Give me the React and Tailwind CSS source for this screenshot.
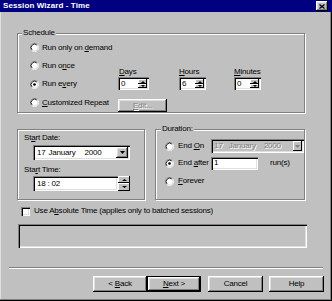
const raised =
  "shadow-[inset_-1px_-1px_0_#000,inset_1px_1px_0_#fff,inset_-2px_-2px_0_#808080,inset_2px_2px_0_#dfdfdf]";
const sunken =
  "shadow-[inset_1px_1px_0_#808080,inset_2px_2px_0_#000,inset_-1px_-1px_0_#fff,inset_-2px_-2px_0_#dfdfdf]";
const etched = "border border-[#808080] shadow-[inset_1px_1px_0_#fff,1px_1px_0_#fff]";
const smallBtn = "shadow-[inset_-1px_-1px_0_#000,inset_1px_1px_0_#fff]";
const disabledText = "text-[#808080] [text-shadow:1px_1px_0_#fff]";

const Arrow = ({ up, color = "#000", w = 5, h = 3 }) => (
  <svg width={w} height={h} viewBox={`0 0 ${w} ${h}`}>
    <polygon points={up ? `${w / 2},0 ${w},${h} 0,${h}` : `0,0 ${w},0 ${w / 2},${h}`} fill={color} />
  </svg>
);

const Radio = ({ checked }) => (
  <svg width="9" height="9" viewBox="0 0 12 12" className="shrink-0">
    <circle cx="6" cy="6" r="4.5" fill="#fff" />
    <path d="M2.11 9.89 A5.5 5.5 0 0 1 9.89 2.11" stroke="#808080" fill="none" />
    <path d="M9.89 2.11 A5.5 5.5 0 0 1 2.11 9.89" stroke="#fff" fill="none" />
    <path d="M2.82 9.18 A4.5 4.5 0 0 1 9.18 2.82" stroke="#000" fill="none" />
    <path d="M9.18 2.82 A4.5 4.5 0 0 1 2.82 9.18" stroke="#dfdfdf" fill="none" />
    {checked && <circle cx="6" cy="6" r="1.8" fill="#000" />}
  </svg>
);

const Spin = ({ value, className }) => (
  <div className={`flex h-[13px] p-[2px] bg-white ${sunken} ${className}`}>
    <div className="flex-1 pl-[1px] leading-[9px]">{value}</div>
    <div className="w-[9px] flex flex-col">
      <div className={`h-[5px] flex items-center justify-center bg-[#c0c0c0] ${smallBtn}`}>
        <Arrow up w={4} h={2} />
      </div>
      <div className={`h-[4px] flex items-center justify-center bg-[#c0c0c0] ${smallBtn}`}>
        <Arrow w={4} h={2} />
      </div>
    </div>
  </div>
);

const Button = ({ children, className = "" }) => (
  <div className={`h-[16px] flex items-center justify-center bg-[#c0c0c0] ${raised} ${className}`}>
    {children}
  </div>
);

export default function App() {
  return (
    <div className="w-[332px] h-[301px] flex flex-col bg-[#c0c0c0] font-['Liberation_Sans',Arial,sans-serif] text-[8px] tracking-[-0.2px] leading-[10px] text-black overflow-hidden">
      {/* title bar */}
      <div className="h-[12px] shrink-0 bg-[#000080] flex items-center">
        <span className="ml-[3px] text-white font-bold tracking-[0.1px]">Session Wizard - Time</span>
        <div className={`ml-auto mr-[4px] w-[12px] h-[10px] bg-[#c0c0c0] flex items-center justify-center ${raised}`}>
          <svg width="6" height="5" viewBox="0 0 6 5">
            <path d="M0.5 0.5 L5.5 4.5 M5.5 0.5 L0.5 4.5" stroke="#000" strokeWidth="1.3" />
          </svg>
        </div>
      </div>

      <div className="flex-1 flex flex-col shadow-[inset_-1px_-1px_0_#000,inset_-2px_-2px_0_#808080,inset_1px_0_0_#dfdfdf]">
        {/* Schedule */}
        <div className={`relative mt-[21px] ml-[17px] w-[288px] h-[80px] flex ${etched}`}>
          <span className="absolute left-[4px] -top-[6px] px-[1px] bg-[#c0c0c0]">Schedule</span>
          <div className="w-[100px] pl-[12px] pt-[5px] flex flex-col">
            <div className="h-[18px] flex items-center gap-[3px]">
              <Radio />
              <span>Run only on <u>d</u>emand</span>
            </div>
            <div className="h-[19px] flex items-center gap-[3px]">
              <Radio />
              <span>Run o<u>n</u>ce</span>
            </div>
            <div className="h-[19px] flex items-center gap-[3px]">
              <Radio checked />
              <span>Run e<u>v</u>ery</span>
            </div>
            <div className="h-[19px] flex items-center gap-[3px]">
              <Radio />
              <span><u>C</u>ustomized Repeat</span>
            </div>
          </div>
          <div className="flex flex-col pt-[33px]">
            <div className="flex">
              <div className="flex flex-col">
                <span className="pl-[1px]"><u>D</u>ays</span>
                <Spin value="0" className="w-[31px]" />
              </div>
              <div className="ml-[30px] flex flex-col">
                <span><u>H</u>ours</span>
                <Spin value="6" className="w-[27px]" />
              </div>
              <div className="ml-[28px] flex flex-col">
                <span><u>M</u>inutes</span>
                <Spin value="0" className="w-[27px]" />
              </div>
            </div>
            <Button className={`mt-[9px] w-[49px] !h-[13px] ${disabledText}`}>
              <span><u>E</u>dit...</span>
            </Button>
          </div>
        </div>

        <div className="flex mt-[16px]">
          {/* Start */}
          <div className={`relative ml-[17px] w-[128px] h-[71px] flex flex-col pl-[6px] pt-[3px] ${etched}`}>
            <span>St<u>a</u>rt Date:</span>
            <div className={`ml-[9px] mt-[2px] w-[97px] h-[15px] flex p-[2px] bg-white ${sunken}`}>
              <div className="flex-1 flex items-center pl-[2px]">
                <span>17</span>
                <span className="ml-[3px]">January</span>
                <span className="ml-[9px]">2000</span>
              </div>
              <div className={`w-[12px] flex items-center justify-center bg-[#c0c0c0] ${raised}`}>
                <Arrow w={5} h={3} />
              </div>
            </div>
            <span className="mt-[5px]">Sta<u>r</u>t Time:</span>
            <div className="ml-[9px] mt-[1px] w-[97px] h-[15px] flex">
              <div className={`flex-1 flex items-center pl-[4px] bg-white ${sunken}`}>
                <span>18</span>
                <span className="ml-[2px]">:</span>
                <span className="ml-[2px]">02</span>
              </div>
              <div className="w-[12px] flex flex-col">
                <div className={`h-[7px] flex items-center justify-center bg-[#c0c0c0] ${smallBtn}`}>
                  <Arrow up w={5} h={2} />
                </div>
                <div className={`h-[8px] flex items-center justify-center bg-[#c0c0c0] ${smallBtn}`}>
                  <Arrow w={5} h={2} />
                </div>
              </div>
            </div>
          </div>

          {/* Duration */}
          <div className={`relative ml-[10px] w-[150px] h-[71px] flex flex-col pl-[9px] pt-[8px] ${etched}`}>
            <span className="absolute left-[5px] -top-[6px] px-[1px] bg-[#c0c0c0]">Duration:</span>
            <div className="h-[16px] flex items-center">
              <div className="w-[47px] flex items-center gap-[4px]">
                <Radio />
                <span>End <u>O</u>n</span>
              </div>
              <div className={`w-[94px] h-[14px] flex p-[2px] bg-[#c0c0c0] ${sunken}`}>
                <div className={`flex-1 flex items-center pl-[1px] ${disabledText}`}>
                  <span>17</span>
                  <span className="ml-[6px]">January</span>
                  <span className="ml-[8px]">2000</span>
                </div>
                <div className={`w-[9px] flex items-center justify-center bg-[#c0c0c0] ${smallBtn}`}>
                  <Arrow w={5} h={3} color="#808080" />
                </div>
              </div>
            </div>
            <div className="mt-[1px] h-[16px] flex items-center">
              <div className="w-[46px] flex items-center gap-[4px]">
                <Radio checked />
                <span>End <u>a</u>fter</span>
              </div>
              <div className={`w-[47px] h-[13px] flex items-center pl-[3px] bg-white ${sunken}`}>1</div>
              <span className="ml-[12px]">run(s)</span>
            </div>
            <div className="mt-[2px] h-[16px] flex items-center gap-[4px]">
              <Radio />
              <span><u>F</u>orever</span>
            </div>
          </div>
        </div>

        {/* Absolute time */}
        <div className="mt-[5px] ml-[21px] h-[12px] flex items-center gap-[4px]">
          <div className={`w-[9px] h-[9px] bg-white ${sunken}`} />
          <span>Use A<u>b</u>solute Time (applies only to batched sessions)</span>
        </div>

        {/* status panel */}
        <div className={`mt-[7px] ml-[18px] w-[289px] h-[24px] bg-[#c0c0c0] ${sunken}`} />

        {/* separator */}
        <div className="mt-[19px] ml-[9px] w-[314px] h-[2px] border-t border-t-[#808080] border-b border-b-white" />

        {/* buttons */}
        <div className="mt-[7px] pl-[93px] flex">
          <Button className="w-[54px]">
            <span>&lt; <u>B</u>ack</span>
          </Button>
          <div className="w-[54px] h-[16px] border border-black">
            <Button className="!h-[14px] w-full">
              <span><u>N</u>ext &gt;</span>
            </Button>
          </div>
          <Button className="ml-[7px] w-[55px]">
            <span>Cancel</span>
          </Button>
          <Button className="ml-[6px] w-[55px]">
            <span>Help</span>
          </Button>
        </div>
      </div>
    </div>
  );
}
